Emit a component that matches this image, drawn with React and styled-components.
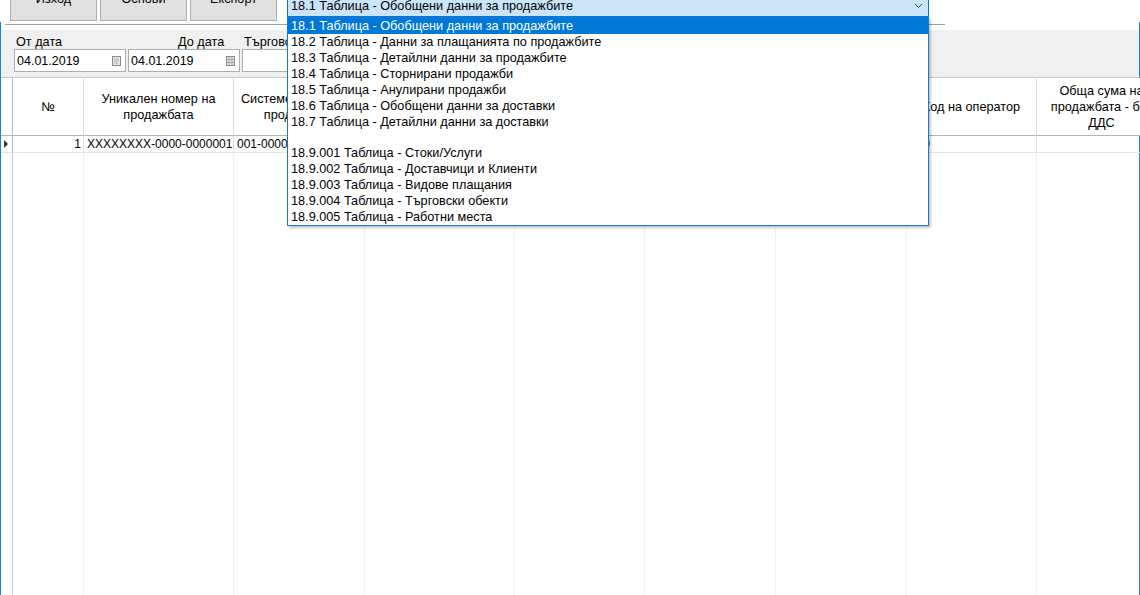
import styled, { createGlobalStyle } from 'styled-components';

const GlobalStyle = createGlobalStyle`
  html, body {
    margin: 0;
    padding: 0;
    background: #ffffff;
  }
  * {
    box-sizing: border-box;
  }
`;

const Window = styled.div`
  position: relative;
  width: 1140px;
  height: 595px;
  overflow: hidden;
  background: #ffffff;
  font-family: 'Liberation Sans', Arial, sans-serif;
  font-size: 12.7px;
  color: #000;
  display: flex;
  flex-direction: column;
`;

const TopRow = styled.div`
  height: 22px;
  flex: none;
  display: flex;
  align-items: flex-start;
  padding-left: 10px;
  gap: 3px;
`;

const ToolButton = styled.button`
  width: 87px;
  height: 45px;
  margin-top: -24px;
  flex: none;
  background: #e1e1e1;
  border: 1px solid #adadad;
  font-family: inherit;
  font-size: 12.7px;
  color: #000;
  padding: 0;
`;

const Combo = styled.div`
  margin-left: 7px;
  margin-top: -5px;
  width: 642px;
  height: 22px;
  flex: none;
  display: flex;
  align-items: center;
  justify-content: space-between;
  padding: 0 5px 0 3px;
  background: #cce4f7;
  border: 1px solid #0078d7;
  white-space: nowrap;
`;

const Framed = styled.div`
  flex: 1;
  display: flex;
  flex-direction: column;
  border-left: 1px solid #1883d7;
  border-right: 1px solid #1883d7;
  min-height: 0;
`;

const SeparatorStrip = styled.div`
  height: 8px;
  flex: none;
  padding-top: 2px;
  padding-left: 4px;
`;

const SeparatorLine = styled.div`
  width: 940px;
  height: 1px;
  background: #a0a0a0;
`;

const FilterPanel = styled.div`
  height: 47px;
  flex: none;
  background: #f0f0f0;
  display: flex;
  padding: 5px 0 0 13px;
  gap: 2px;
`;

const Field = styled.div`
  display: flex;
  flex-direction: column;
  width: ${(p) => p.$width}px;
`;

const FieldLabel = styled.div`
  height: 14px;
  line-height: 14px;
  padding-left: ${(p) => p.$indent || 2}px;
  white-space: nowrap;
`;

const DateBox = styled.div`
  height: 23px;
  background: #fff;
  border: 1px solid #abadb3;
  display: flex;
  align-items: center;
  justify-content: space-between;
  padding: 0 4px 0 2px;
  font-size: 12.5px;
`;

const Grid = styled.div`
  flex: 1;
  display: grid;
  grid-template-columns: 12px 71px 150px 131px 150px 130px 131px 131px 130px 130px;
  grid-template-rows: 58px 17px 1fr;
  border-top: 1px solid #c8c8c8;
  min-height: 0;
`;

const HeadCell = styled.div`
  display: flex;
  align-items: center;
  justify-content: center;
  text-align: center;
  line-height: 16px;
  padding: 0 4px;
  background: #fff;
  border-right: 1px solid ${(p) => (p.$corner ? '#b9b9b9' : '#dcdcdc')};
  border-bottom: 1px solid #b4b4b4;
  white-space: nowrap;
  overflow: hidden;
`;

const Cell = styled.div`
  display: flex;
  align-items: center;
  justify-content: ${(p) => (p.$right ? 'flex-end' : 'flex-start')};
  padding: 0 2px 0 3px;
  font-size: 12px;
  border-right: 1px solid ${(p) => (p.$rowHead ? '#b9b9b9' : '#e3e3e3')};
  border-bottom: 1px solid #e3e3e3;
  white-space: nowrap;
  overflow: hidden;
  line-height: 16px;
`;

const Filler = styled.div`
  border-right: 1px solid ${(p) => (p.$rowHead ? '#c8c8c8' : '#f0f0f0')};
`;

const DropList = styled.div`
  position: absolute;
  left: 287px;
  top: 17px;
  width: 642px;
  height: 209px;
  background: #fff;
  border: 1px solid #1a78d0;
  box-shadow: 2px 2px 2px rgba(0, 0, 0, 0.22);
  display: flex;
  flex-direction: column;
`;

const DropItem = styled.div`
  height: 16px;
  line-height: 16px;
  padding-left: 3px;
  white-space: nowrap;
  background: ${(p) => (p.$selected ? '#0078d7' : 'transparent')};
  color: ${(p) => (p.$selected ? '#fff' : '#000')};
`;

const Chevron = () => (
  <svg width="9" height="6" viewBox="0 0 9 6">
    <path d="M1 1 L4.5 4.5 L8 1" fill="none" stroke="#404040" strokeWidth="1" />
  </svg>
);

const CalendarIcon = ({ grid }) => (
  <svg width="9" height="10" viewBox="0 0 9 10">
    <rect x="0.5" y="0.5" width="8" height="9" fill="#e8e8e8" stroke="#8a8a8a" />
    {grid ? (
      <path d="M0.5 3.5 H8.5 M0.5 6.5 H8.5 M3 0.5 V9.5 M6 0.5 V9.5" stroke="#a8a8a8" strokeWidth="1" />
    ) : (
      <path d="M2 3 H7 M2 5 H7 M2 7 H6" stroke="#b0b0b0" strokeWidth="1" />
    )}
  </svg>
);

const RowMarker = () => (
  <svg width="5" height="8" viewBox="0 0 5 8">
    <path d="M0 0 L4 4 L0 8 Z" fill="#333" />
  </svg>
);

const options = [
  '18.1 Таблица - Обобщени данни за продажбите',
  '18.2 Таблица - Данни за плащанията по продажбите',
  '18.3 Таблица - Детайлни данни за продажбите',
  '18.4 Таблица - Сторнирани продажби',
  '18.5 Таблица - Анулирани продажби',
  '18.6 Таблица - Обобщени данни за доставки',
  '18.7 Таблица - Детайлни данни за доставки',
  '',
  '18.9.001 Таблица - Стоки/Услуги',
  '18.9.002 Таблица - Доставчици и Клиенти',
  '18.9.003 Таблица - Видове плащания',
  '18.9.004 Таблица - Търговски обекти',
  '18.9.005 Таблица - Работни места',
];

const columns = [
  { title: ['№'] },
  { title: ['Уникален номер на', 'продажбата'] },
  { title: ['Системен номер на', 'продажбата'] },
  { title: ['Дата и час на', 'продажбата'] },
  { title: ['Код на търговски', 'обект'] },
  { title: ['Индивидуален номер', 'на ФУ'] },
  { title: ['Номер на работно', 'място'] },
  { title: ['Код на оператор'] },
  { title: ['Обща сума на', 'продажбата - без', 'ДДС'] },
];

const row = ['1', 'XXXXXXXX-0000-0000001', '001-0000001', '04.01.2019 10:15', '0001', 'ZK000001', '1', '000', ''];

const App = () => {
  return (
    <>
      <GlobalStyle />
      <Window>
        <TopRow>
          <ToolButton>Изход</ToolButton>
          <ToolButton>Основи</ToolButton>
          <ToolButton>Експорт</ToolButton>
          <Combo>
            <span>{options[0]}</span>
            <Chevron />
          </Combo>
        </TopRow>

        <Framed>
          <SeparatorStrip>
            <SeparatorLine />
          </SeparatorStrip>

          <FilterPanel>
            <Field $width={112}>
              <FieldLabel>От дата</FieldLabel>
              <DateBox>
                <span>04.01.2019</span>
                <CalendarIcon />
              </DateBox>
            </Field>
            <Field $width={112}>
              <FieldLabel $indent={50}>До дата</FieldLabel>
              <DateBox>
                <span>04.01.2019</span>
                <CalendarIcon grid />
              </DateBox>
            </Field>
            <Field $width={160}>
              <FieldLabel>Търговски обект</FieldLabel>
              <DateBox />
            </Field>
          </FilterPanel>

          <Grid>
            <HeadCell $corner />
            {columns.map((c, i) => (
              <HeadCell key={i}>
                <div>
                  {c.title.map((t, j) => (
                    <div key={j}>{t}</div>
                  ))}
                </div>
              </HeadCell>
            ))}

            <Cell $rowHead>
              <RowMarker />
            </Cell>
            {row.map((v, i) => (
              <Cell key={i} $right={i === 0}>
                {v}
              </Cell>
            ))}

            <Filler $rowHead />
            {columns.map((c, i) => (
              <Filler key={i} />
            ))}
          </Grid>
        </Framed>

        <DropList>
          {options.map((o, i) => (
            <DropItem key={i} $selected={i === 0}>
              {o}
            </DropItem>
          ))}
        </DropList>
      </Window>
    </>
  );
};

export default App;
